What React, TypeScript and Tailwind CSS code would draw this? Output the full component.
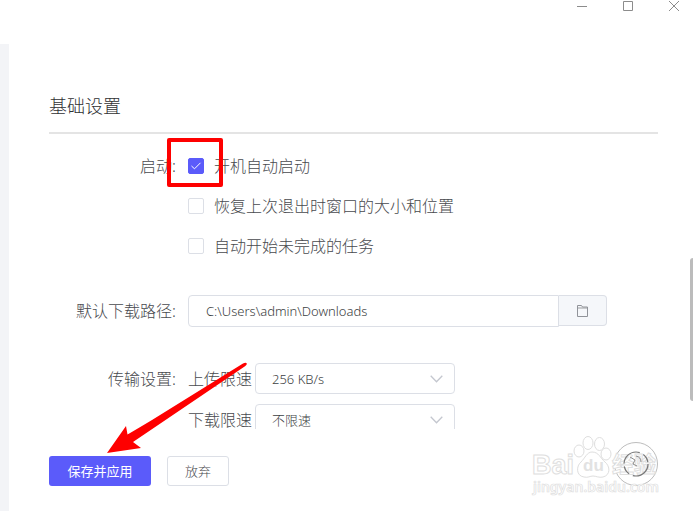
import type { ReactNode } from "react";

const FONT = "font-['Noto_Sans','Noto_Sans_CJK_SC',sans-serif]";

function TitleBar() {
  const button = "flex h-3 w-[46px] items-center justify-center text-[#8c8c8c]";
  return (
    <header className="flex h-11 shrink-0 justify-end overflow-hidden">
      <div className="-mr-1 flex">
        <button type="button" aria-label="最小化" className={button}>
          <svg width="10" height="10" viewBox="0 0 10 10" stroke="currentColor">
            <path d="M0 5.5h10" />
          </svg>
        </button>
        <button type="button" aria-label="最大化" className={button}>
          <svg width="10" height="10" viewBox="0 0 10 10" fill="none" stroke="currentColor">
            <path d="M.5.5h9v9h-9z" />
          </svg>
        </button>
        <button type="button" aria-label="关闭" className={button}>
          <svg width="10" height="10" viewBox="0 0 10 10" stroke="currentColor">
            <path d="M0 0l10 10M10 0L0 10" />
          </svg>
        </button>
      </div>
    </header>
  );
}

function Row({ label, htmlFor, children }: { label: string; htmlFor: string; children: ReactNode }) {
  return (
    <div className="flex items-start gap-3">
      <label htmlFor={htmlFor} className="w-[127px] shrink-0 whitespace-nowrap text-right leading-8">
        {label}
      </label>
      <div className="min-w-0 flex-1">{children}</div>
    </div>
  );
}

function CheckOption({ id, label, checked = false, marked = false }: { id: string; label: string; checked?: boolean; marked?: boolean }) {
  return (
    <div className="flex h-8 items-center gap-2.5">
      <span className="relative flex">
        <input
          id={id}
          type="checkbox"
          defaultChecked={checked}
          className="peer size-4 appearance-none rounded-[2px] border border-[#dcdfe6] bg-white checked:border-[#5b5bfa] checked:bg-[#5b5bfa]"
        />
        <svg className="pointer-events-none absolute inset-0 hidden peer-checked:block" width="16" height="16" viewBox="0 0 16 16" fill="none" stroke="#fff">
          <path d="M3.500 8l3 2.800 6-6" />
        </svg>
        {marked && <span className="pointer-events-none absolute -left-[21px] -top-5 z-10 h-[49px] w-14 rounded-[2px] border-4 border-[#fe0000]" />}
      </span>
      <label htmlFor={id}>{label}</label>
    </div>
  );
}

function SpeedSelect({ id, label, value }: { id: string; label: string; value: string }) {
  return (
    <div className="flex items-center gap-[3px]">
      <label htmlFor={id} className="w-16 whitespace-nowrap">{label}</label>
      <div className="relative w-[200px]">
        <select id={id} defaultValue={value} className="block h-[31px] w-full appearance-none rounded border border-[#dcdfe6] bg-white px-4 pt-0.5 text-[13px] text-[#3c3e42]">
          <option>256 KB/s</option>
          <option>不限速</option>
        </select>
        <svg className="pointer-events-none absolute right-3 top-3" width="13" height="8" viewBox="0 0 13 8" fill="none" stroke="#c4c7cf" strokeWidth="1.3">
          <path d="M.7.7l5.8 6 5.8-6" />
        </svg>
      </div>
    </div>
  );
}

function Arrow() {
  return (
    <svg className="pointer-events-none absolute left-[58px] -top-[94px] z-10" width="142" height="91" viewBox="0 0 142 91" fill="#fe0000">
      <path d="M136 1.500q3-1.500 3.800 0 .4 1.400-1.800 2.700L26 80l8 6L0 91l19-27 1.500 8.500Q30 67 45 58z" />
    </svg>
  );
}

function Watermark() {
  return (
    <svg className="pointer-events-none absolute bottom-[11px] right-[33px]" width="130" height="66" viewBox="0 0 130 66" fill="#fff" stroke="#dedede">
      <circle cx="106" cy="30" r="21.500" stroke="#bdbdbd" />
      <g strokeWidth="1">
        <ellipse cx="49" cy="17" rx="5" ry="6" />
        <ellipse cx="58" cy="9" rx="5" ry="6.500" />
        <ellipse cx="69.500" cy="10" rx="5" ry="6.500" />
        <ellipse cx="76" cy="20" rx="5" ry="6" />
        <path d="M62 18c-5 0-7 6-11 10-5 4-5 14 3 15 4 1 6-1 9-1s6 2 10 1c8-2 7-11 2-15-5-4-6-10-13-10z" />
      </g>
      <g className="font-['Liberation_Sans','Noto_Sans_CJK_SC',sans-serif] font-bold">
        <text x="2" y="40" fontSize="27">Bai</text>
        <text x="53" y="37" fontSize="17" fill="#e2e2e2" stroke="none">du</text>
        <text x="82" y="38" fontSize="22">经验</text>
      </g>
      <circle cx="106" cy="30" r="12" fill="none" stroke="#777" strokeWidth="1.200" strokeDasharray="22 4 9 3" />
      <path d="M100 23l5 3-2 4 4 2M106 22q5 1 5 6" fill="none" stroke="#8c8c8c" />
      <text x="3" y="58" fontSize="14" stroke="#dedede" strokeWidth=".7" className="font-['Noto_Sans',sans-serif] font-semibold">jingyan.baidu.com</text>
    </svg>
  );
}

export default function App() {
  return (
    <div className={`${FONT} relative flex h-screen flex-col overflow-hidden bg-white text-base font-light text-[#484a4e]`}>
      <TitleBar />
      <div className="flex min-h-0 flex-1">
        <aside className="w-[9px] shrink-0 bg-[#f3f4f7]" />
        <div className="flex min-w-0 flex-1 flex-col">
          <main className="min-h-0 flex-1 overflow-hidden pl-10 pr-[35px] pt-12">
            <h1 className="border-b-2 border-[#e4e4e4] pb-3 text-lg text-[#303133]">基础设置</h1>
            <form className="flex flex-col pt-4">
              <Row label="启动:" htmlFor="autostart">
                <div className="flex flex-col gap-2">
                  <CheckOption id="autostart" label="开机自动启动" checked marked />
                  <CheckOption id="restore" label="恢复上次退出时窗口的大小和位置" />
                  <CheckOption id="resume" label="自动开始未完成的任务" />
                </div>
              </Row>
              <div className="pt-[33px]">
                <Row label="默认下载路径:" htmlFor="path">
                  <div className="flex max-w-[419px] items-start">
                    <input id="path" type="text" defaultValue="C:\Users\admin\Downloads" className="h-8 min-w-0 flex-1 rounded-l border border-[#dcdfe6] bg-white px-[17px] text-[13px] text-[#3c3e42]" />
                    <button type="button" aria-label="选择文件夹" className="flex h-[31px] w-12 items-center justify-center rounded-r border border-l-0 border-[#dcdfe6] bg-[#f5f7fa]">
                      <svg width="11" height="12" viewBox="0 0 11 12" fill="none" stroke="#909399">
                        <path d="M1 3h9" stroke="#c8cacd" strokeWidth="2" />
                        <path d="M.5.5h4l1 1.500h5v9.500H.5z" />
                      </svg>
                    </button>
                  </div>
                </Row>
              </div>
              <div className="pt-9">
                <Row label="传输设置:" htmlFor="upload">
                  <div className="flex flex-col gap-2.5">
                    <SpeedSelect id="upload" label="上传限速" value="256 KB/s" />
                    <SpeedSelect id="download" label="下载限速" value="不限速" />
                  </div>
                </Row>
              </div>
            </form>
          </main>
          <footer className="relative flex h-[82px] shrink-0 items-start gap-4 pl-10 pt-[27px]">
            <button type="button" className="h-[30px] w-[102px] rounded-[3px] bg-[#5b5bfa] pt-0.5 text-[13px] font-normal text-white">保存并应用</button>
            <button type="button" className="h-[30px] w-[62px] rounded-[3px] border border-[#dcdfe6] bg-white pt-0.5 text-[13px]">放弃</button>
            <div className="pointer-events-none absolute left-10 top-[27px]">
              <Arrow />
            </div>
            <Watermark />
          </footer>
        </div>
      </div>
      <div className="absolute -right-[3px] top-[258px] h-[143px] w-1.5 rounded-full bg-[#bcbcbc]" />
    </div>
  );
}
